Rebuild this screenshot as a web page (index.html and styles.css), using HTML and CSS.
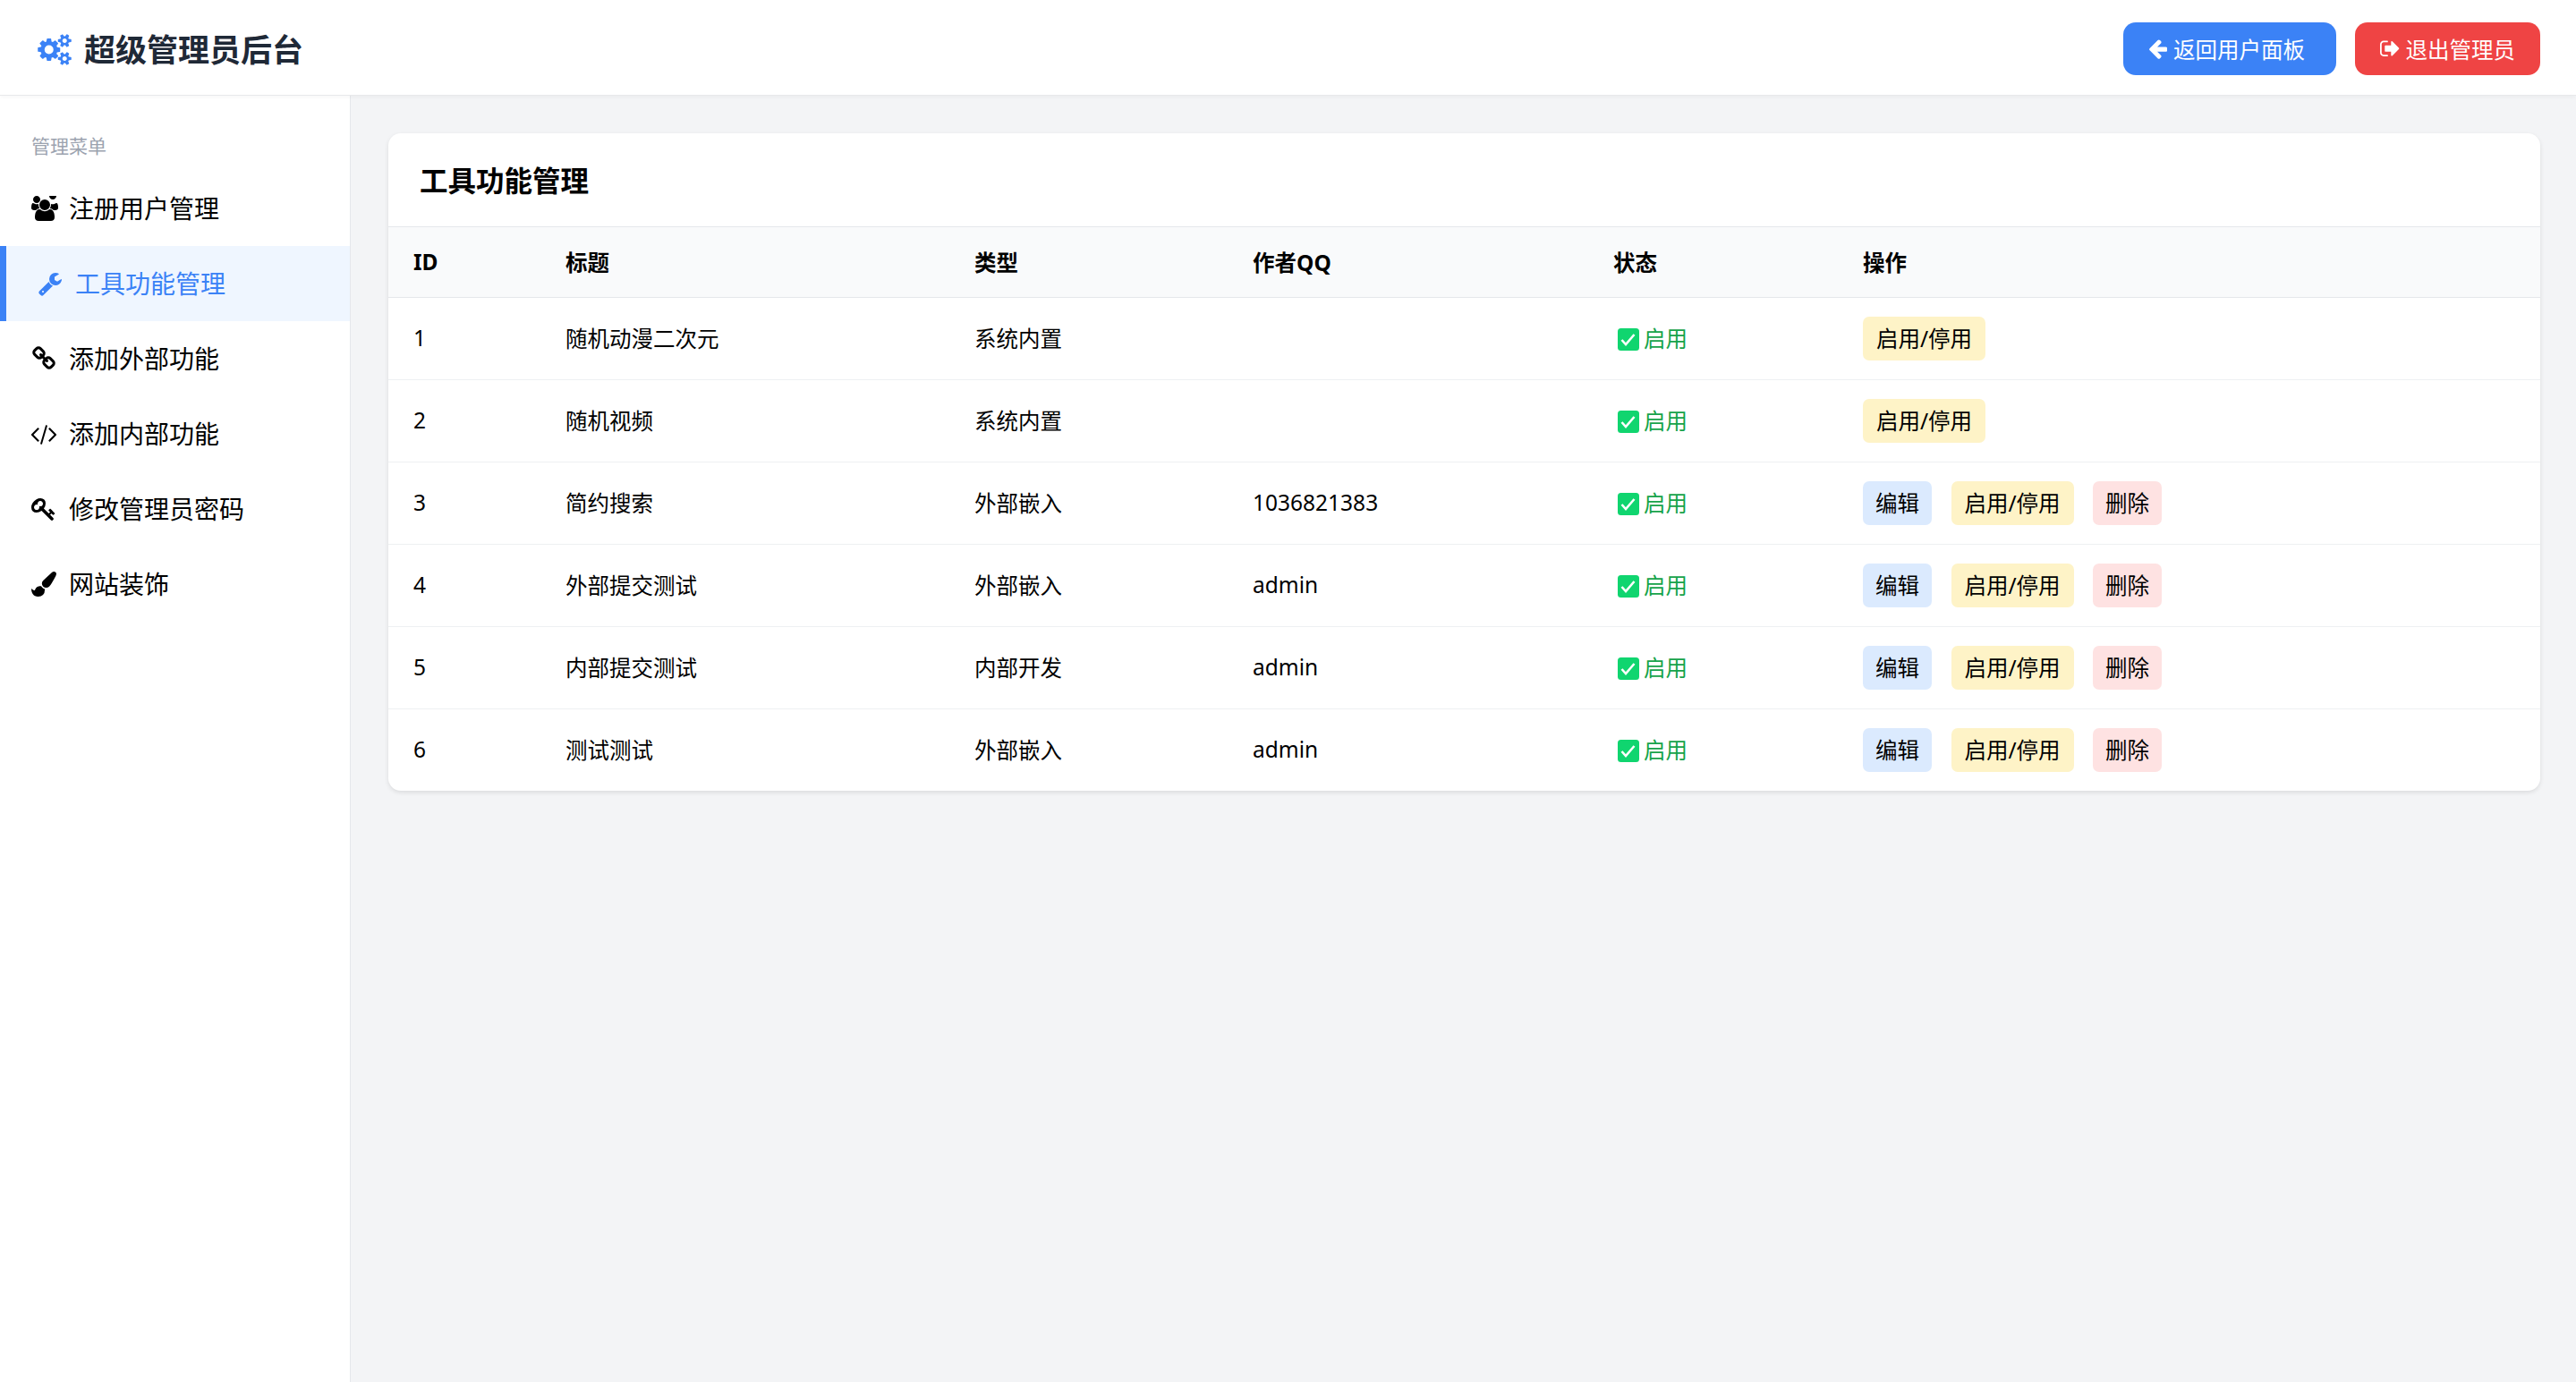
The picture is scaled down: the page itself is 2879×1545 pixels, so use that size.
FILE: index.html
```html
<!DOCTYPE html>
<html lang="zh-CN">
<head>
  <meta charset="UTF-8" />
  <meta name="viewport" content="width=device-width, initial-scale=1.0" />
  <title>超级管理员后台</title>
  <link rel="stylesheet" href="styles.css">
</head>
<body>
  <!-- 图标 -->
  <svg class="icon-defs" aria-hidden="true">
    <symbol id="i-cogs" viewBox="0 0 1920 1792"><path d="M896 896q0-106-75-181t-181-75-181 75-75 181 75 181 181 75 181-75 75-181zm768 512q0-52-38-90t-90-38-90 38-38 90q0 53 37.5 90.5t90.5 37.5 90.5-37.5 37.5-90.5zm0-1024q0-52-38-90t-90-38-90 38-38 90q0 53 37.5 90.5t90.5 37.5 90.5-37.5 37.5-90.5zm-384 421v185q0 10-7 19.5t-16 10.5l-155 24q-11 35-32 76 34 48 90 115 7 11 7 20 0 12-7 19-23 30-82.5 89.5t-78.5 59.5q-11 0-21-7l-115-90q-37 19-77 31-11 108-23 155-7 24-30 24h-186q-11 0-20-7.5t-10-17.5l-23-153q-34-10-75-31l-118 89q-7 7-20 7-11 0-21-8-144-133-144-160 0-9 7-19 10-14 41-53t47-61q-23-44-35-82l-152-24q-10-1-17-9.5t-7-19.5v-185q0-10 7-19.5t16-10.5l155-24q11-35 32-76-34-48-90-115-7-11-7-19 0-12 7-20 22-30 82-89t79-59q11 0 21 7l115 90q34-18 77-32 11-108 23-154 7-24 30-24h186q11 0 20 7.5t10 17.5l23 153q34 10 75 31l118-89q8-7 20-7 11 0 21 8 144 133 144 160 0 8-7 19-12 16-42 54t-45 60q23 48 34 82l152 23q10 2 17 10.5t7 19.5zm640 533v140q0 16-149 31-12 27-30 52 51 113 51 138 0 4-4 7-122 71-124 71-8 0-46-47t-52-68q-20 2-30 2t-30-2q-14 21-52 68t-46 47q-2 0-124-71-4-3-4-7 0-25 51-138-18-25-30-52-149-15-149-31v-140q0-16 149-31 13-29 30-52-51-113-51-138 0-4 4-7 4-2 35-20t59-34 30-16q8 0 46 46.5t52 67.5q20-2 30-2t30 2q51-71 92-112l6-2q4 0 124 70 4 3 4 7 0 25-51 138 17 23 30 52 149 15 149 31zm0-1024v140q0 16-149 31-12 27-30 52 51 113 51 138 0 4-4 7-122 71-124 71-8 0-46-47t-52-68q-20 2-30 2t-30-2q-14 21-52 68t-46 47q-2 0-124-71-4-3-4-7 0-25 51-138-18-25-30-52-149-15-149-31v-140q0-16 149-31 13-29 30-52-51-113-51-138 0-4 4-7 4-2 35-20t59-34 30-16q8 0 46 46.5t52 67.5q20-2 30-2t30 2q51-71 92-112l6-2q4 0 124 70 4 3 4 7 0 25-51 138 17 23 30 52 149 15 149 31z"/></symbol>
    <symbol id="i-users" viewBox="64 0 1920 1792"><path d="M657 896q-162 5-265 128h-134q-82 0-138-40.5t-56-118.5q0-353 124-353 6 0 43.5 21t97.5 42.5 119 21.5q67 0 133-23-5 37-5 66 0 139 81 256zm1071 637q0 120-73 189.5t-194 69.5h-874q-121 0-194-69.5t-73-189.5q0-53 3.5-103.5t14-109 26.5-108.5 43-97.5 62-81 85.5-53.5 111.5-20q10 0 43 21.5t73 48 107 48 135 21.5 135-21.5 107-48 73-48 43-21.5q61 0 111.5 20t85.5 53.5 62 81 43 97.5 26.5 108.5 14 109 3.5 103.5zm-1024-1277q0 106-75 181t-181 75-181-75-75-181 75-181 181-75 181 75 75 181zm704 384q0 159-112.5 271.5t-271.5 112.5-271.5-112.5-112.5-271.5 112.5-271.5 271.5-112.5 271.5 112.5 112.5 271.5zm576 225q0 78-56 118.5t-138 40.5h-134q-103-123-265-128 81-117 81-256 0-29-5-66 66 23 133 23 59 0 119-21.5t97.5-42.5 43.5-21q124 0 124 353zm-128-865q0 106-75 181t-181 75-181-75-75-181 75-181 181-75 181 75 75 181z"/></symbol>
    <symbol id="i-wrench" viewBox="0 0 1792 1792"><path d="M448 1472q0-26-19-45t-45-19-45 19-19 45 19 45 45 19 45-19 19-45zm644-420l-682 682q-37 37-90 37-52 0-91-37l-106-108q-38-36-38-90 0-53 38-91l681-681q39 98 114.5 173.5t173.5 114.5zm634-435q0 39-23 106-47 134-164.5 217.5t-258.5 83.5q-185 0-316.5-131.5t-131.5-316.5 131.5-316.5 316.5-131.5q58 0 121.5 16.5t107.5 46.5q16 11 16 28t-16 28l-293 169v224l193 107q5-3 79-48.5t135.5-81 70.5-35.5q15 0 23.5 10t8.5 25z"/></symbol>
    <symbol id="i-link" viewBox="0 0 1792 1792"><path d="M1520 1216q0-40-28-68l-208-208q-28-28-68-28-42 0-72 32 3 3 19 18.5t21.5 21.5 15 19 13 25.5 3.5 27.5q0 40-28 68t-68 28q-15 0-27.5-3.5t-25.5-13-19-15-21.5-21.5-18.5-19q-33 31-33 73 0 40 28 68l206 207q27 27 68 27 40 0 68-26l147-146q28-28 28-67zm-703-705q0-40-28-68l-206-207q-28-28-68-28-39 0-68 27l-147 146q-28 28-28 67 0 40 28 68l208 208q27 27 68 27 42 0 72-31-3-3-19-18.5t-21.5-21.5-15-19-13-25.5-3.5-27.5q0-40 28-68t68-28q15 0 27.5 3.5t25.5 13 19 15 21.5 21.5 18.5 19q33-31 33-73zm895 705q0 120-85 203l-147 146q-83 83-203 83-121 0-204-85l-206-207q-83-83-83-203 0-123 88-209l-88-88q-86 88-208 88-120 0-204-84l-208-208q-84-84-84-204t85-203l147-146q83-83 203-83 121 0 204 85l206 207q83 83 83 203 0 123-88 209l88 88q86-88 208-88 120 0 204 84l208 208q84 84 84 204z"/></symbol>
    <symbol id="i-code" viewBox="0 0 1792 1792"><path d="M553 1399l-50 50q-10 10-23 10t-23-10l-466-466q-10-10-10-23t10-23l466-466q10-10 23-10t23 10l50 50q10 10 10 23t-10 23l-393 393 393 393q10 10 10 23t-10 23zm591-1067l-373 1291q-4 13-15.5 19.5t-23.5 2.5l-62-17q-13-4-19.5-15.5t-2.5-24.5l373-1291q4-13 15.5-19.5t23.5-2.5l62 17q13 4 19.5 15.5t2.5 24.5zm657 651l-466 466q-10 10-23 10t-23-10l-50-50q-10-10-10-23t10-23l393-393-393-393q-10-10-10-23t10-23l50-50q10-10 23-10t23 10l466 466q10 10 10 23t-10 23z"/></symbol>
    <symbol id="i-key" viewBox="0 0 1792 1792"><path d="M832 512q0-80-56-136t-136-56-136 56-56 136q0 42 19 83-41-19-83-19-80 0-136 56t-56 136 56 136 136 56 136-56 56-136q0-42-19-83 41 19 83 19 80 0 136-56t56-136zm851 704q0 17-49 66t-66 49q-9 0-28.5-16t-36.5-33-38.5-40-24.5-26l-96 96 220 220q28 28 28 68 0 42-39 81t-81 39q-40 0-68-28l-671-671q-176 131-365 131-163 0-265.5-102.5t-102.5-265.5q0-160 95-313t248-248 313-95q163 0 265.5 102.5t102.5 265.5q0 189-131 365l355 355 96-96q-3-3-26-24.5t-40-38.5-33-36.5-16-28.5q0-17 49-66t66-49q13 0 23 10 6 6 46 44.5t82 79.5 86.5 86 73 78 28.5 41z"/></symbol>
    <symbol id="i-brush" viewBox="0 0 1792 1792"><path d="M1615 0q70 0 122.5 46.5t52.5 116.5q0 63-45 151-332 629-465 752-97 91-218 91-126 0-216.5-92.5t-90.5-219.5q0-128 92-212l638-579q59-54 130-54zm-909 1034q39 76 106.5 130t150.5 76l1 71q4 213-129.5 347t-348.5 134q-123 0-218-46.5t-152.5-127.5-86.5-183-29-220q7 5 41 30t62 44.5 59 36.5 46 17q41 0 55-37 25-66 57.5-112.5t69.5-76 88-47.5 103-25.5 125-10.5z"/></symbol>
    <symbol id="i-back" viewBox="128 0 1536 1792"><path d="M1664 896v128q0 53-32.5 90.5t-84.5 37.5h-704l293 294q38 36 38 90t-38 90l-75 76q-37 37-90 37-52 0-91-37l-651-652q-37-37-37-90 0-52 37-91l651-650q38-38 91-38 52 0 90 38l75 74q38 38 38 91t-38 91l-293 293h704q52 0 84.5 37.5t32.5 90.5z"/></symbol>
    <symbol id="i-out" viewBox="64 0 1568 1792"><path d="M704 1440q0 4 1 20t.5 26.5-3 23.5-10 19.5-20.5 6.5h-320q-119 0-203.5-84.5t-84.5-203.5v-704q0-119 84.5-203.5t203.5-84.5h320q13 0 22.5 9.5t9.5 22.5q0 4 1 20t.5 26.5-3 23.5-10 19.5-20.5 6.5h-320q-66 0-113 47t-47 113v704q0 66 47 113t113 47h312l11.5 1 11.5 3 8 5.5 7 9 2 13.5zm928-544q0 26-19 45l-544 544q-19 19-45 19t-45-19-19-45v-288h-448q-26 0-45-19t-19-45v-384q0-26 19-45t45-19h448v-288q0-26 19-45t45-19 45 19l544 544q19 19 19 45z"/></symbol>
    <symbol id="i-check" viewBox="0 0 24 25"><rect width="24" height="25" rx="3.5" fill="#10d56f"/><path d="M4.5 13l4.5 5 9.5-11" fill="none" stroke="#fff" stroke-width="2.6"/></symbol>
  </svg>

  <header class="topbar">
    <h1 class="brand"><svg class="brand-icon"><use href="#i-cogs"/></svg>超级管理员后台</h1>
    <div class="top-actions">
      <a class="top-btn btn-blue"><svg class="top-icon"><use href="#i-back"/></svg>返回用户面板</a>
      <a class="top-btn btn-red"><svg class="top-icon"><use href="#i-out"/></svg>退出管理员</a>
    </div>
  </header>

  <div class="layout">
    <nav class="sidebar">
      <div class="menu-label">管理菜单</div>
      <a class="menu-item"><svg class="menu-icon icon-users"><use href="#i-users"/></svg>注册用户管理</a>
      <a class="menu-item active"><svg class="menu-icon"><use href="#i-wrench"/></svg>工具功能管理</a>
      <a class="menu-item"><svg class="menu-icon"><use href="#i-link"/></svg>添加外部功能</a>
      <a class="menu-item"><svg class="menu-icon"><use href="#i-code"/></svg>添加内部功能</a>
      <a class="menu-item"><svg class="menu-icon"><use href="#i-key"/></svg>修改管理员密码</a>
      <a class="menu-item"><svg class="menu-icon"><use href="#i-brush"/></svg>网站装饰</a>
    </nav>

    <main class="main">
      <section class="card">
        <h2 class="card-title">工具功能管理</h2>
        <table class="tool-table">
          <colgroup>
            <col class="col-id"><col class="col-title"><col class="col-type"><col class="col-qq"><col class="col-status"><col class="col-ops">
          </colgroup>
          <thead>
            <tr><th>ID</th><th>标题</th><th>类型</th><th>作者QQ</th><th>状态</th><th>操作</th></tr>
          </thead>
          <tbody>
            <tr>
              <td>1</td><td>随机动漫二次元</td><td>系统内置</td><td></td>
              <td><span class="status"><svg class="status-icon"><use href="#i-check"/></svg>启用</span></td>
              <td><div class="ops"><a class="op op-toggle">启用/停用</a></div></td>
            </tr>
            <tr>
              <td>2</td><td>随机视频</td><td>系统内置</td><td></td>
              <td><span class="status"><svg class="status-icon"><use href="#i-check"/></svg>启用</span></td>
              <td><div class="ops"><a class="op op-toggle">启用/停用</a></div></td>
            </tr>
            <tr>
              <td>3</td><td>简约搜索</td><td>外部嵌入</td><td>1036821383</td>
              <td><span class="status"><svg class="status-icon"><use href="#i-check"/></svg>启用</span></td>
              <td><div class="ops"><a class="op op-edit">编辑</a><a class="op op-toggle">启用/停用</a><a class="op op-del">删除</a></div></td>
            </tr>
            <tr>
              <td>4</td><td>外部提交测试</td><td>外部嵌入</td><td>admin</td>
              <td><span class="status"><svg class="status-icon"><use href="#i-check"/></svg>启用</span></td>
              <td><div class="ops"><a class="op op-edit">编辑</a><a class="op op-toggle">启用/停用</a><a class="op op-del">删除</a></div></td>
            </tr>
            <tr>
              <td>5</td><td>内部提交测试</td><td>内部开发</td><td>admin</td>
              <td><span class="status"><svg class="status-icon"><use href="#i-check"/></svg>启用</span></td>
              <td><div class="ops"><a class="op op-edit">编辑</a><a class="op op-toggle">启用/停用</a><a class="op op-del">删除</a></div></td>
            </tr>
            <tr>
              <td>6</td><td>测试测试</td><td>外部嵌入</td><td>admin</td>
              <td><span class="status"><svg class="status-icon"><use href="#i-check"/></svg>启用</span></td>
              <td><div class="ops"><a class="op op-edit">编辑</a><a class="op op-toggle">启用/停用</a><a class="op op-del">删除</a></div></td>
            </tr>
          </tbody>
        </table>
      </section>
    </main>
  </div>
</body>
</html>
```

FILE: styles.css
```css
* {
  box-sizing: border-box;
}
html, body {
  height: 100%;
  overflow: hidden;
}
body {
  margin: 0;
  display: flex;
  flex-direction: column;
  font-family: "Noto Sans", "Noto Sans CJK SC", sans-serif;
  font-size: 24.5px;
  color: #000;
  background-color: #f3f4f6;
}
.icon-defs {
  display: none;
}
svg {
  fill: currentColor;
  flex-shrink: 0;
}

/* 顶部 */
.topbar {
  height: 107px;
  flex-shrink: 0;
  display: flex;
  align-items: center;
  justify-content: space-between;
  padding: 2px 40px 0 42px;
  background: #ffffff;
  border-bottom: 1px solid #e8e9eb;
  box-shadow: 0 2px 4px rgba(0,0,0,0.03);
  position: relative;
}
.brand {
  display: flex;
  align-items: center;
  margin: 0 0 1px;
  font-size: 35px;
  font-weight: 700;
  color: #1f2937;
}
.brand-icon {
  width: 38px;
  height: 35px;
  margin: 3px 14px 0 0;
  color: #3b82f6;
}
.top-actions {
  display: flex;
  gap: 21px;
  margin-top: 1px;
}
.top-btn {
  display: flex;
  align-items: center;
  height: 59px;
  padding: 0 28px 1px;
  border-radius: 14px;
  color: #ffffff;
  font-size: 24.5px;
}
.btn-blue {
  background: #3b82f6;
  padding-right: 35px;
}
.btn-red {
  background: #ef4444;
}
.top-icon {
  width: 21.5px;
  height: 24.5px;
  margin-right: 7px;
}

/* 侧边栏 */
.layout {
  flex: 1;
  display: flex;
  min-height: 0;
}
.sidebar {
  width: 392px;
  flex-shrink: 0;
  padding-top: 35px;
  background: #ffffff;
  border-right: 1px solid #e5e7eb;
}
.menu-label {
  height: 42px;
  margin-bottom: 7px;
  padding-left: 35px;
  font-size: 21px;
  line-height: 42px;
  color: #9ca3af;
}
.menu-item {
  display: flex;
  align-items: center;
  height: 84px;
  padding: 0 0 2px 35px;
  font-size: 28px;
  color: #000;
}
.menu-item.active {
  background: #eff6ff;
  border-left: 7px solid #3b82f6;
  color: #3b82f6;
}
.menu-icon {
  width: 28px;
  height: 28px;
  margin: 2px 14px 0 0;
}
.icon-users {
  width: 30px;
  margin-right: 12px;
}

/* 表格卡片 */
.main {
  flex: 1;
  min-width: 0;
  padding: 42px 40px 42px 42px;
}
.card {
  background: #ffffff;
  border-radius: 14px;
  box-shadow: 0 2px 5px rgba(0,0,0,0.1);
  overflow: hidden;
}
.card-title {
  height: 105px;
  margin: 0;
  padding: 0 35px;
  font-size: 31.5px;
  font-weight: 700;
  line-height: 105px;
  border-bottom: 1px solid #e5e7eb;
}
.tool-table {
  width: 100%;
  table-layout: fixed;
  border-collapse: collapse;
}
.col-id { width: 170px; }
.col-title { width: 457px; }
.col-type { width: 311px; }
.col-qq { width: 403px; }
.col-status { width: 279px; }
.tool-table th {
  height: 78px;
  padding: 0 28px;
  text-align: left;
  font-weight: 700;
  background: #f9fafb;
  border-bottom: 1px solid #e5e7eb;
}
.tool-table td {
  height: 92px;
  padding: 0 28px 2px;
  border-bottom: 1px solid #eef0f2;
}
.tool-table tr:last-child td {
  border-bottom: none;
}
.status {
  display: flex;
  align-items: center;
  padding-left: 5px;
  color: #16a34a;
}
.status-icon {
  width: 24px;
  height: 25px;
  margin: 5px 5px 0 0;
}
.ops {
  display: flex;
  gap: 21.5px;
  margin-top: 2px;
}
.op {
  height: 49px;
  padding: 0 14px;
  border-radius: 7px;
  line-height: 49px;
  color: #000;
}
.op-edit { background: #dbeafe; }
.op-toggle {
  width: 137px;
  text-align: center;
  background: #fef3c7;
}
.op-del { background: #fee2e2; }
```
